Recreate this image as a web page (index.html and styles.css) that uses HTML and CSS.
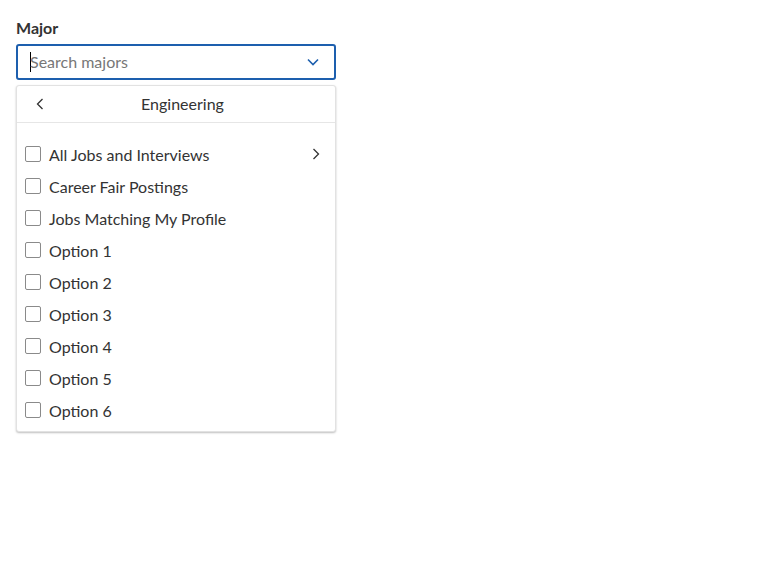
FILE: index.html
```html
<!DOCTYPE html>
<html>
<head>
<meta charset="utf-8">
<link rel="stylesheet" href="styles.css">
</head>
<body>
<div class="field">
  <label class="label">Major</label>
  <div class="input">
    <span class="caret"></span>
    <span class="placeholder">Search majors</span>
    <svg class="chev" width="12" height="8" viewBox="0 0 12 8"><path d="M1 1.5 L6 6.5 L11 1.5" fill="none" stroke="#1d5fae" stroke-width="1.6"/></svg>
  </div>
  <div class="menu">
    <div class="menu-head">
      <svg class="back" width="8" height="12" viewBox="0 0 8 12"><path d="M6.5 1 L1.5 6 L6.5 11" fill="none" stroke="#333" stroke-width="1.3"/></svg>
      <span class="title">Engineering</span>
    </div>
    <ul class="list">
      <li class="item"><span class="box"></span><span class="text">All Jobs and Interviews</span>
        <svg class="fwd" width="8" height="12" viewBox="0 0 8 12"><path d="M1.5 1 L6.5 6 L1.5 11" fill="none" stroke="#333" stroke-width="1.3"/></svg></li>
      <li class="item"><span class="box"></span><span class="text">Career Fair Postings</span></li>
      <li class="item"><span class="box"></span><span class="text">Jobs Matching My Profile</span></li>
      <li class="item"><span class="box"></span><span class="text">Option 1</span></li>
      <li class="item"><span class="box"></span><span class="text">Option 2</span></li>
      <li class="item"><span class="box"></span><span class="text">Option 3</span></li>
      <li class="item"><span class="box"></span><span class="text">Option 4</span></li>
      <li class="item"><span class="box"></span><span class="text">Option 5</span></li>
      <li class="item"><span class="box"></span><span class="text">Option 6</span></li>
    </ul>
  </div>
</div>
</body>
</html>
```
FILE: styles.css
```css
* { box-sizing: border-box; }
body {
  margin: 0;
  padding: 16px;
  font-family: "Lato", "Liberation Sans", sans-serif;
  color: #333;
  background: #fff;
}
.field { width: 320px; display: flex; flex-direction: column; }
.label {
  font-weight: 700;
  font-size: 16px;
  line-height: 24px;
  margin-bottom: 4px;
}
.input {
  height: 36px;
  border: 2px solid #1d5fae;
  border-radius: 3px;
  display: flex;
  align-items: center;
  padding: 0 15px 2px 12px;
}
.caret { width: 1px; height: 20px; background: #000; margin-right: -1px; margin-top: 2px; }
.placeholder { flex: 1; color: #777; font-size: 16px; }
.chev { display: block; margin-top: 2px; }
.menu {
  margin-top: 5px;
  border: 1px solid #e2e2e2;
  border-radius: 3px;
  box-shadow: 0 1px 2px rgba(0,0,0,0.25);
  background: #fff;
}
.menu-head {
  height: 37px;
  display: flex;
  align-items: center;
  border-bottom: 1px solid #e6e6e6;
  padding-left: 19px;
  padding-bottom: 1px;
}
.back { display: block; margin-top: 1px; }
.title {
  flex: 1;
  text-align: center;
  font-size: 16px;
  padding-right: 14px;
}
.list { list-style: none; margin: 0; padding: 15px 0 5px; }
.item {
  height: 32px;
  display: flex;
  align-items: center;
  padding: 0 15px 0 8px;
  font-size: 16px;
}
.box {
  width: 16px; height: 16px;
  border: 1px solid #8a8a8a;
  border-radius: 2px;
  margin-right: 8px;
  flex: none;
}
.text { flex: 1; }
.fwd { display: block; }
```
